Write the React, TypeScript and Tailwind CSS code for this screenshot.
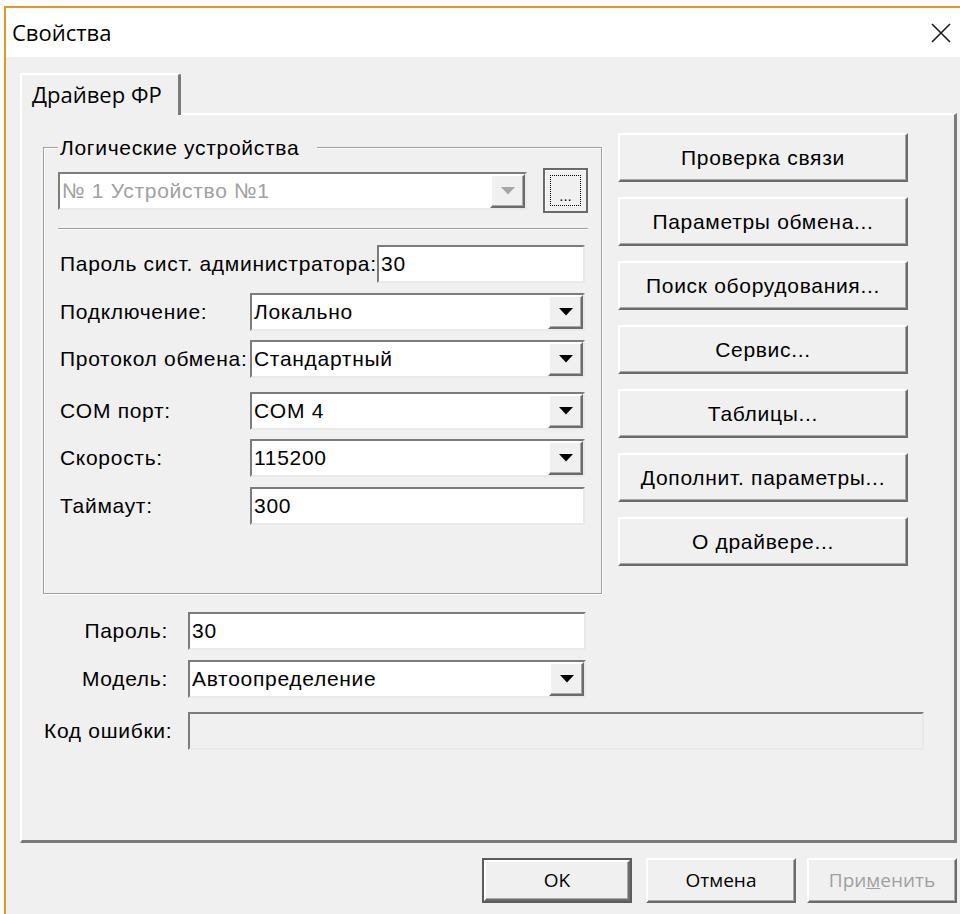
const sunken =
  "border-2 border-t-[#7c7c7c] border-l-[#7c7c7c] border-b-[#e9e9e9] border-r-[#e9e9e9]";
const raised =
  "border-2 border-t-[#ffffff] border-l-[#ffffff] border-b-[#6b6b6b] border-r-[#6b6b6b] shadow-[inset_-1px_-1px_0_#a8a8a8]";

function Arrow({ disabled }: { disabled?: boolean }) {
  return (
    <svg width="14" height="8" viewBox="0 0 14 8">
      <path d="M0 0h14L7 7.5z" fill={disabled ? "#a6a6a6" : "#000"} />
    </svg>
  );
}

function Combo({ value, width, disabled }: { value: string; width: string; disabled?: boolean }) {
  return (
    <div className={`flex h-[38px] shrink-0 ${width} bg-white ${sunken}`}>
      <span className={`flex-1 truncate pl-[2px] leading-[34px] ${disabled ? "text-[#a0a0a0]" : ""}`}>
        {value}
      </span>
      <span className={`flex w-[35px] items-center justify-center bg-[#f0f0f0] ${raised}`}>
        <Arrow disabled={disabled} />
      </span>
    </div>
  );
}

function Field({ value, width, disabled }: { value: string; width: string; disabled?: boolean }) {
  return (
    <div
      className={`h-[38px] shrink-0 ${width} ${disabled ? "bg-[#f0f0f0]" : "bg-white"} ${sunken} pl-[2px] leading-[34px]`}
    >
      {value}
    </div>
  );
}

function Button({ children, className = "" }: { children: React.ReactNode; className?: string }) {
  return (
    <div className={`flex items-center justify-center bg-[#f0f0f0] ${raised} ${className}`}>{children}</div>
  );
}

const sideButtons = [
  "Проверка связи",
  "Параметры обмена...",
  "Поиск оборудования...",
  "Сервис...",
  "Таблицы...",
  "Дополнит. параметры...",
  "О драйвере...",
];

export default function App() {
  return (
    <div className="h-[914px] w-[960px] overflow-hidden bg-white pl-[4px] pt-[6px] font-['Liberation_Sans',Arial,sans-serif] text-[21px] tracking-[0.7px] text-black">
      <div className="flex h-full flex-col border-l-2 border-t-2 border-[#e99428]">
        {/* title bar */}
        <div className="flex h-[49px] items-center justify-between bg-white pl-[6px] pr-[8px]">
          <span className="font-['Open_Sans',sans-serif] text-[22px] tracking-normal">Свойства</span>
          <svg width="22" height="22" viewBox="0 0 22 22">
            <path d="M2 2l18 18M20 2L2 20" stroke="#1a1a1a" strokeWidth="1.6" />
          </svg>
        </div>

        <div className="flex-1 bg-[#f0f0f0] pl-[14px] pr-[3px] pt-[16px]">
          {/* tab strip */}
          <div className="flex h-[40px]">
            <div className="relative z-10 -mb-[2px] flex h-[42px] w-[161px] items-start rounded-tr-[3px] border-l-2 border-r-[3px] border-t-2 border-l-[#ffffff] border-r-[#7a7a7a] border-t-[#ffffff] bg-[#f0f0f0] pl-[10px] pt-[3px] font-['Open_Sans',sans-serif] text-[22px] tracking-normal">
              Драйвер ФР
            </div>
          </div>

          {/* tab page */}
          <div className="flex h-[730px] w-[937px] flex-col border-b-[3px] border-l-2 border-r-[3px] border-t-2 border-b-[#7a7a7a] border-l-[#ffffff] border-r-[#7a7a7a] border-t-[#ffffff] pt-[18px]">
            <div className="flex">
              {/* group box */}
              <div className="ml-[21px] mt-[14px] h-[447px] w-[559px] border border-[#a0a0a0] shadow-[inset_1px_1px_0_#ffffff,1px_1px_0_#ffffff]">
                <div className="-mt-[12px] ml-[14px] w-fit bg-[#f0f0f0] pl-[2px] pr-[18px] leading-[24px]">
                  Логические устройства
                </div>
                <div className="ml-[14px] mt-[8px] flex h-[45px] items-center gap-[16px]">
                  <Combo value="№ 1 Устройство №1" width="w-[469px]" disabled />
                  <div className="flex h-[45px] w-[45px] items-center justify-center border-2 border-[#6a6a6a] bg-[#f0f0f0] shadow-[inset_1px_1px_0_#ffffff]">
                    <div className="flex h-[31px] w-[31px] items-end justify-center border border-dotted border-black pb-[2px] text-[15px] leading-none tracking-normal">
                      ...
                    </div>
                  </div>
                </div>
                <div className="ml-[14px] mt-[15px] h-[2px] w-[530px] border-b border-t border-b-[#ffffff] border-t-[#a0a0a0]" />

                <div className="mx-[16px] mt-[14px] flex h-[40px] items-center">
                  <span className="flex-1 whitespace-nowrap">Пароль сист. администратора:</span>
                  <Field value="30" width="w-[208px]" />
                </div>
                <div className="mx-[16px] mt-[9px] flex items-center">
                  <span className="w-[190px]">Подключение:</span>
                  <Combo value="Локально" width="w-[335px]" />
                </div>
                <div className="mx-[16px] mt-[9px] flex items-center">
                  <span className="w-[190px] whitespace-nowrap">Протокол обмена:</span>
                  <Combo value="Стандартный" width="w-[335px]" />
                </div>
                <div className="mx-[16px] mt-[14px] flex items-center">
                  <span className="w-[190px]">COM порт:</span>
                  <Combo value="COM 4" width="w-[335px]" />
                </div>
                <div className="mx-[16px] mt-[9px] flex items-center">
                  <span className="w-[190px]">Скорость:</span>
                  <Combo value="115200" width="w-[335px]" />
                </div>
                <div className="mx-[16px] mt-[10px] flex items-center">
                  <span className="w-[190px]">Таймаут:</span>
                  <Field value="300" width="w-[335px]" />
                </div>
              </div>

              {/* command buttons */}
              <div className="ml-[16px] flex flex-col gap-[15px]">
                {sideButtons.map((label) => (
                  <Button key={label} className="h-[49px] w-[290px]">
                    {label}
                  </Button>
                ))}
              </div>
            </div>

            <div className="ml-[22px] mt-[18px] flex items-center">
              <span className="w-[124px] text-right">Пароль:</span>
              <div className="ml-[20px]">
                <Field value="30" width="w-[398px]" />
              </div>
            </div>
            <div className="ml-[22px] mt-[10px] flex items-center">
              <span className="w-[124px] text-right">Модель:</span>
              <div className="ml-[20px]">
                <Combo value="Автоопределение" width="w-[398px]" />
              </div>
            </div>
            <div className="ml-[22px] mt-[14px] flex items-center">
              <span className="w-[124px] whitespace-nowrap text-right">Код ошибки:</span>
              <div className="ml-[20px]">
                <Field value="" width="w-[736px]" disabled />
              </div>
            </div>
          </div>

          {/* dialog buttons */}
          <div className="mt-[15px] flex justify-end tracking-normal">
            <div className="h-[45px] w-[150px] border-2 border-[#5c5c5c]">
              <Button className="h-full w-full font-['Open_Sans',sans-serif] text-[19px]">OK</Button>
            </div>
            <Button className="ml-[14px] h-[45px] w-[150px] font-['Open_Sans',sans-serif] text-[19px]">
              Отмена
            </Button>
            <Button className="ml-[11px] h-[45px] w-[150px] font-['Open_Sans',sans-serif] text-[19px] text-[#a0a0a0]">
              <span>
                При<span className="underline">м</span>енить
              </span>
            </Button>
          </div>
        </div>
      </div>
    </div>
  );
}
